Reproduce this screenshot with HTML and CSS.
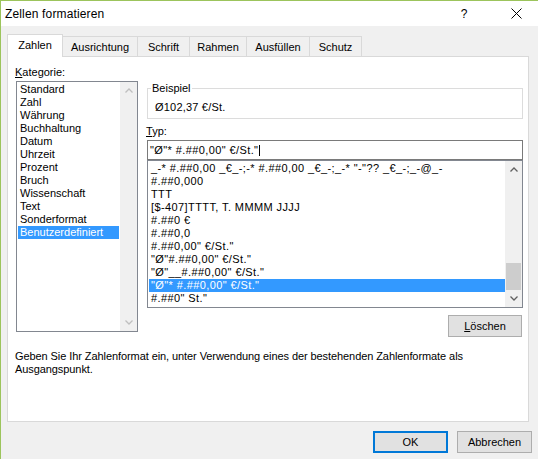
FILE: index.html
```html
<!DOCTYPE html>
<html lang="de">
<head>
<meta charset="utf-8">
<title>Zellen formatieren</title>
<link rel="stylesheet" href="styles.css">
</head>
<body>
<div class="window">
  <div class="titlebar">
    <span class="title">Zellen formatieren</span>
    <span class="help">?</span>
    <span class="close"><svg width="11" height="11" viewBox="0 0 11 11"><path d="M0.5 0.5 L10.5 10.5 M10.5 0.5 L0.5 10.5" stroke="#000" stroke-width="1" fill="none"/></svg></span>
  </div>
  <div class="tabs">
    <div class="tab active t-zahlen">Zahlen</div>
    <div class="tab t-ausrichtung">Ausrichtung</div>
    <div class="tab t-schrift">Schrift</div>
    <div class="tab t-rahmen">Rahmen</div>
    <div class="tab t-ausfuellen">Ausfüllen</div>
    <div class="tab t-schutz">Schutz</div>
  </div>
  <div class="panel">
    <div class="columns">
      <div class="left">
        <div class="label cat-label"><u>K</u>ategorie:</div>
        <div class="listbox catlist">
          <ul class="items">
            <li>Standard</li>
            <li>Zahl</li>
            <li>Währung</li>
            <li>Buchhaltung</li>
            <li>Datum</li>
            <li>Uhrzeit</li>
            <li>Prozent</li>
            <li>Bruch</li>
            <li>Wissenschaft</li>
            <li>Text</li>
            <li>Sonderformat</li>
            <li class="selected">Benutzerdefiniert</li>
          </ul>
          <div class="scrollbar disabled">
            <div class="arrow"><svg width="8" height="5" viewBox="0 0 8 5"><path d="M0.5 4.5 L4 1 L7.5 4.5" fill="none" stroke="currentColor" stroke-width="1.3"/></svg></div>
            <div class="track"></div>
            <div class="arrow"><svg width="8" height="5" viewBox="0 0 8 5"><path d="M0.5 0.5 L4 4 L7.5 0.5" fill="none" stroke="currentColor" stroke-width="1.3"/></svg></div>
          </div>
        </div>
      </div>
      <div class="right">
        <div class="group">
          <span class="legend">Beispiel</span>
          <div class="sample">Ø102,37 €/St.</div>
        </div>
        <div class="label typ-label"><u>T</u>yp:</div>
        <div class="input"><span class="code">"Ø"* #.##0,00" €/St."</span><span class="caret"></span></div>
        <div class="listbox typelist">
          <ul class="items code">
            <li>_-* #.##0,00 _€_-;-* #.##0,00 _€_-;_-* "-"?? _€_-;_-@_-</li>
            <li>#.##0,000</li>
            <li>TTT</li>
            <li>[$-407]TTTT, T. MMMM JJJJ</li>
            <li>#.##0 €</li>
            <li>#.##0,0</li>
            <li>#.##0,00" €/St."</li>
            <li>"Ø"#.##0,00" €/St."</li>
            <li>"Ø"__#.##0,00" €/St."</li>
            <li class="selected">"Ø"* #.##0,00" €/St."</li>
            <li>#.##0" St."</li>
          </ul>
          <div class="scrollbar">
            <div class="arrow"><svg width="8" height="5" viewBox="0 0 8 5"><path d="M0.5 4.5 L4 1 L7.5 4.5" fill="none" stroke="currentColor" stroke-width="1.3"/></svg></div>
            <div class="track"><div class="thumb"></div></div>
            <div class="arrow"><svg width="8" height="5" viewBox="0 0 8 5"><path d="M0.5 0.5 L4 4 L7.5 0.5" fill="none" stroke="currentColor" stroke-width="1.3"/></svg></div>
          </div>
        </div>
        <div class="btnrow"><button class="btn del"><u>L</u>öschen</button></div>
      </div>
    </div>
    <p class="desc">Geben Sie Ihr Zahlenformat ein, unter Verwendung eines der bestehenden Zahlenformate als<br>Ausgangspunkt.</p>
  </div>
  <div class="footer">
    <button class="btn default">OK</button>
    <button class="btn">Abbrechen</button>
  </div>
</div>
</body>
</html>
```

FILE: styles.css
```css
* { box-sizing: border-box; }
html, body { margin: 0; padding: 0; }
body {
  width: 538px;
  height: 459px;
  overflow: hidden;
  font-family: "Liberation Sans", Arial, sans-serif;
  font-size: 11px;
  color: #000;
  background: #f0f0f0;
}
u { text-decoration: underline; text-underline-offset: 1px; }

.window {
  width: 538px;
  height: 459px;
  border-top: 1px solid #9cc45c;
  border-left: 1px solid #9cc45c;
  background: #f0f0f0;
  display: flex;
  flex-direction: column;
}

.titlebar {
  height: 25px;
  flex: none;
  background: #fff;
  display: flex;
  align-items: center;
  font-size: 12px;
  padding-left: 4px;
}
.title { flex: 1; letter-spacing: 0.15px; }
.help { width: 46px; text-align: center; margin-right: 7px; }
.close { width: 44px; display: flex; justify-content: center; align-items: center; }
.close svg { display: block; }

.tabs {
  flex: none;
  margin-top: 8px;
  height: 22px;
  padding-left: 6px;
  display: flex;
  align-items: flex-end;
}
.tab {
  height: 20px;
  border: 1px solid #d9d9d9;
  border-bottom: none;
  margin-left: -1px;
  background: #f0f0f0;
  text-align: center;
  line-height: 13px;
  padding-top: 4px;
}
.tab.active {
  height: 23px;
  margin-left: 0;
  margin-bottom: -1px;
  background: #fff;
  position: relative;
  z-index: 1;
  padding-top: 4px;
}
.t-zahlen { width: 56px; }
.t-ausrichtung { width: 76px; }
.t-schrift { width: 53px; }
.t-rahmen { width: 58px; }
.t-ausfuellen { width: 64px; }
.t-schutz { width: 53px; }

.panel {
  flex: none;
  margin-left: 6px;
  width: 522px;
  height: 366px;
  border: 1px solid #d9d9d9;
  background: #fff;
}
.columns {
  display: flex;
  padding-left: 8px;
  gap: 9px;
}
.left { width: 122px; padding-top: 9px; }
.label { line-height: 13px; height: 13px; white-space: nowrap; }
.cat-label { margin-left: -1px; }

.listbox {
  border: 1px solid #828790;
  display: flex;
  background: #fff;
}
.items {
  list-style: none;
  margin: 0;
  flex: 1;
  min-width: 0;
  overflow: hidden;
}
.items li {
  line-height: 13px;
  height: 13px;
  padding-left: 2px;
  white-space: nowrap;
}
.items li.selected { background: #3399ff; color: #fff; }
.code { letter-spacing: 0.4px; }

.catlist { margin-top: 2px; height: 251px; }
.catlist .items { padding: 1px 1px 0 1px; }

.scrollbar {
  width: 17px;
  flex: none;
  background: #f0f0f0;
  display: flex;
  flex-direction: column;
  color: #606060;
}
.scrollbar.disabled { color: #bfbfbf; }
.arrow {
  height: 17px;
  flex: none;
  display: flex;
  align-items: center;
  justify-content: center;
}
.arrow svg { display: block; }
.track {
  flex: 1;
  display: flex;
  flex-direction: column;
  justify-content: flex-end;
  padding: 0 1px;
}
.thumb { height: 27px; background: #cdcdcd; }

.right { width: 376px; }
.group {
  position: relative;
  margin-top: 31px;
  height: 31px;
  border: 1px solid #dcdcdc;
  padding: 12px 0 0 7px;
}
.legend {
  position: absolute;
  top: -7px;
  left: 3px;
  padding: 0 1px;
  line-height: 13px;
  background: #fff;
}
.sample { line-height: 13px; letter-spacing: 0.2px; }
.typ-label { margin-top: 6px; margin-left: -1px; }
.input {
  margin-top: 2px;
  height: 20px;
  border: 1px solid #7a7a7a;
  padding-left: 2px;
  line-height: 18px;
  white-space: nowrap;
  display: flex;
  align-items: center;
}
.caret {
  display: inline-block;
  width: 1px;
  height: 11px;
  background: #000;
  margin-left: 1px;
}
.typelist { height: 148px; }
.typelist .items { padding: 1px 0 0 1px; }

.btnrow { display: flex; justify-content: flex-end; margin-top: 7px; padding-right: 1px; }
.btn {
  font-family: inherit;
  font-size: 11px;
  color: #000;
  background: #e1e1e1;
  border: 1px solid #adadad;
  height: 22px;
  width: 75px;
  padding: 0;
  margin: 0;
  line-height: 18px;
}
.del { width: 74px; }
.btn.default { border: 2px solid #0078d7; }

.desc {
  margin: 13px 0 0 7px;
  line-height: 13px;
  letter-spacing: -0.08px;
}

.footer {
  flex: none;
  margin-top: 9px;
  display: flex;
  justify-content: flex-end;
  gap: 9px;
  padding-right: 6px;
}
```
